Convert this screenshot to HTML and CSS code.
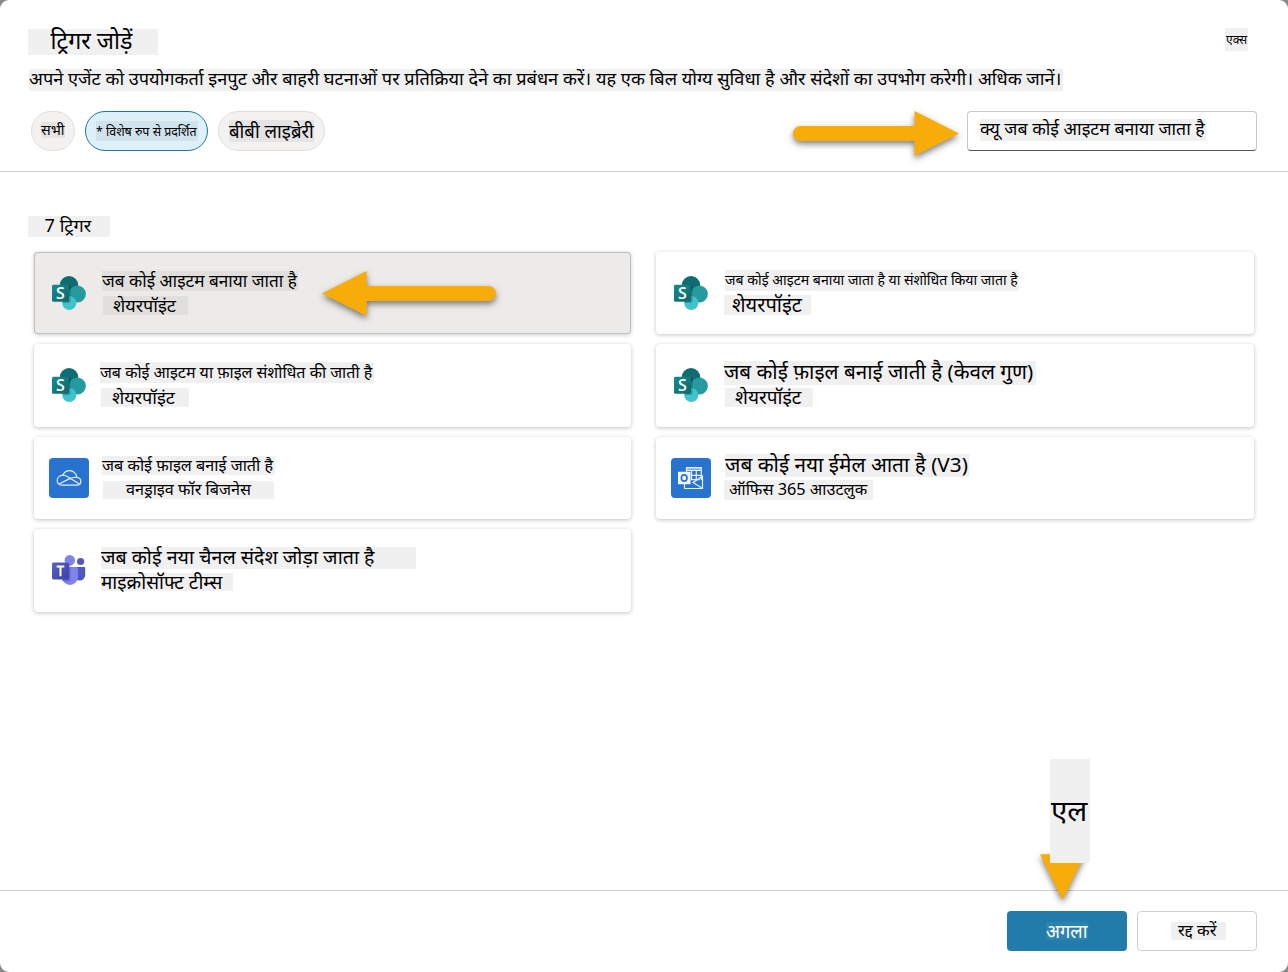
FILE: index.html
```
<!DOCTYPE html>
<html lang="hi">
<head>
<meta charset="utf-8">
<title>ट्रिगर जोड़ें</title>
<link rel="stylesheet" href="styles.css">
</head>
<body>
<svg class="defs" width="0" height="0" aria-hidden="true">
  <defs>
    <linearGradient id="spTile" x1="0" y1="0" x2="1" y2="1"><stop offset="0" stop-color="#158c8f"/><stop offset="1" stop-color="#0f666a"/></linearGradient>
    <linearGradient id="tmTile" x1="0" y1="0" x2="1" y2="1"><stop offset="0" stop-color="#5a62c3"/><stop offset="1" stop-color="#3940ab"/></linearGradient>
    <symbol id="sharepoint" viewBox="0 0 40 40">
      <circle cx="20" cy="12.2" r="9.2" fill="#0f6c70"/>
      <circle cx="28.3" cy="21" r="8.6" fill="#259a9f"/>
      <circle cx="20.3" cy="30" r="7" fill="#3fc3cf"/>
      <path d="M11 12.5h9.2q1.4 0 1.4 1.4v14.6q0 1.4-1.4 1.4h-6.8" fill="#000" opacity=".2"/>
      <rect x="3" y="11.8" width="17" height="17" rx="1.4" fill="url(#spTile)"/>
      <text x="11.5" y="26" text-anchor="middle" class="tile-letter">S</text>
    </symbol>
  </defs>
</svg>
<main class="dialog">
  <header class="top">
    <div class="title-row">
      <h1 class="label title">ट्रिगर जोड़ें</h1>
      <button class="close label">एक्स</button>
    </div>
    <p class="label desc">अपने एजेंट को उपयोगकर्ता इनपुट और बाहरी घटनाओं पर प्रतिक्रिया देने का प्रबंधन करें। यह एक बिल योग्य सुविधा है और संदेशों का उपभोग करेगी। अधिक जानें।</p>
    <div class="filters">
      <button class="chip all"><span class="label">सभी</span></button>
      <button class="chip featured"><span class="label">* विशेष रुप से प्रदर्शित</span></button>
      <button class="chip library"><span class="label">बीबी लाइब्रेरी</span></button>
      <div class="search"><span class="label">क्यू जब कोई आइटम बनाया जाता है</span></div>
    </div>
  </header>
  <section class="body">
    <h2 class="label count">7 ट्रिगर</h2>
    <div class="grid">
      <article class="card selected c1">
        <svg class="icon"><use href="#sharepoint"/></svg>
        <div class="text"><span class="label name">जब कोई आइटम बनाया जाता है</span><span class="label sub">शेयरपॉइंट</span></div>
      </article>
      <article class="card c2">
        <svg class="icon"><use href="#sharepoint"/></svg>
        <div class="text"><span class="label name">जब कोई आइटम बनाया जाता है या संशोधित किया जाता है</span><span class="label sub">शेयरपॉइंट</span></div>
      </article>
      <article class="card c3">
        <svg class="icon"><use href="#sharepoint"/></svg>
        <div class="text"><span class="label name">जब कोई आइटम या फ़ाइल संशोधित की जाती है</span><span class="label sub">शेयरपॉइंट</span></div>
      </article>
      <article class="card c4">
        <svg class="icon"><use href="#sharepoint"/></svg>
        <div class="text"><span class="label name">जब कोई फ़ाइल बनाई जाती है (केवल गुण)</span><span class="label sub">शेयरपॉइंट</span></div>
      </article>
      <article class="card c5">
        <svg class="icon" viewBox="0 0 40 40">
          <rect width="40" height="40" rx="4" fill="#2872d0"/>
          <g fill="none" stroke="#e8f1fc" stroke-width="1.2" stroke-linejoin="round" stroke-linecap="round">
            <path d="M13.2 27.2h14.3c2.5 0 4.3-1.6 4.3-3.8 0-2.1-1.7-3.8-4-3.9-.3-3.9-3.3-6.8-7.2-6.8-3 0-5.5 1.7-6.7 4.5-3.3.2-5.7 2.4-5.7 5.2 0 2.8 2.2 4.800 5 4.800z"/>
            <path d="M13.9 17.2c2 0 3.2.5 4.8 1.5l11.7 7.3M10 26l10.200-5.100c2.300-1.200 4.500-1.700 7.600-1.400"/>
          </g>
        </svg>
        <div class="text"><span class="label name">जब कोई फ़ाइल बनाई जाती है</span><span class="label sub">वनड्राइव फॉर बिजनेस</span></div>
      </article>
      <article class="card c6">
        <svg class="icon" viewBox="0 0 40 40">
          <rect width="40" height="40" rx="4" fill="#2872d0"/>
          <g fill="none" stroke="#e8f1fc" stroke-width="1.2">
            <path d="M15.5 14V9.6h14.8v12.400M15.500 12.500h14.800M20.500 17.300h9.800M20.500 21.700h8M20.500 12.800v9.500M25.300 12.800v9.800"/>
            <path d="M13.5 26v4.5h18V18.200l-9.500 6.300 9.300 5.800"/>
          </g>
          <path d="M15.5 9.1h14.8v3.200H15.500z" fill="#e8f1fc" opacity=".5"/>
          <rect x="7" y="13.8" width="12.5" height="12.4" fill="#f4f8fe"/>
          <ellipse cx="13.2" cy="20" rx="2.8" ry="3.2" fill="none" stroke="#2872d0" stroke-width="1.7"/>
        </svg>
        <div class="text"><span class="label name">जब कोई नया ईमेल आता है (V3)</span><span class="label sub">ऑफिस 365 आउटलुक</span></div>
      </article>
      <article class="card c7">
        <svg class="icon" viewBox="0 0 40 40">
          <circle cx="31.6" cy="11.5" r="3.6" fill="#5058c0"/>
          <path d="M25 17h10q1.2 0 1.2 1.2v6.8a5.5 5.5 0 0 1-11 0z" fill="#5058c0"/>
          <circle cx="20.8" cy="10.2" r="5.2" fill="#7f84e8"/>
          <path d="M13 17h14.3q1.6 0 1.6 1.6v8.300a8 8 0 0 1-16 0z" fill="#7f84e8"/>
          <path d="M13 14h7q1.500 0 1.500 1.500v14.500q0 1.300-1.500 1.300h-7z" fill="#33389a" opacity=".35"/>
          <rect x="3" y="12.5" width="17" height="17" rx="1.4" fill="url(#tmTile)"/>
          <path d="M7.700 16.600h7.600M11.500 16.600v9.600" stroke="#fff" stroke-width="2"/>
        </svg>
        <div class="text"><span class="label name">जब कोई नया चैनल संदेश जोड़ा जाता है</span><span class="label sub">माइक्रोसॉफ्ट टीम्स</span></div>
      </article>
    </div>
  </section>
  <footer class="actions">
    <button class="btn primary"><span class="label">अगला</span></button>
    <button class="btn secondary"><span class="label">रद्द करें</span></button>
  </footer>
  <svg class="arrows" viewBox="0 0 1288 972" aria-hidden="true">
    <path d="M800.500 126H914.500V111L959 133.500 914.500 156V141H800.500a7.500 7.500 0 0 1 0-15z"/>
    <path d="M488.500 286H366.700V271L322 293.500 366.700 316V301H488.500a7.500 7.500 0 0 0 0-15z"/>
    <path d="M1040 854.300H1085L1062.500 900z"/>
  </svg>
  <div class="callout">एल</div>
</main>
</body>
</html>
```

FILE: styles.css
```
* { box-sizing: border-box; }
body { margin: 0; background: #8a8a8a; font-family: "Noto Sans", "Noto Sans Devanagari", sans-serif; color: #000; }
button { font-family: inherit; color: inherit; }
.defs { position: absolute; }
.dialog { position: relative; display: flex; flex-direction: column; width: 1288px; height: 972px; background: #fff; border-radius: 9px; overflow: hidden; }
.label { display: block; flex: none; margin: 0; background: #f0f0f0; white-space: nowrap; font-weight: 400; }

/* header */
.top { height: 172px; padding: 28px 31px 0 28px; border-bottom: 1px solid #d0d0d0; }
.title-row { display: flex; justify-content: space-between; height: 41px; }
.title { width: 130px; height: 26px; margin-top: 1px; padding-left: 22.500px; font-size: 23.200px; line-height: 22px; }
.close { width: 23px; height: 23px; margin-right: 9px; padding: 0 0 0 1px; border: 0; font-size: 12px; line-height: 20px; text-align: left; }
.desc { width: 1034px; height: 22px; margin-left: 1px; font-size: 18.180px; line-height: 18px; }
.filters { display: flex; align-items: flex-start; gap: 10px; margin: 20px 0 0 3px; }
.chip { height: 40px; display: flex; align-items: flex-start; padding: 0; border: 1px solid #e1dfdd; border-radius: 20px; background: #f3f2f1; }
.chip .label { background: #e5e4e4; text-align: left; }
.all { width: 44px; padding: 10px 0 0 9px; }
.all .label { width: 24px; height: 16px; font-size: 14.300px; line-height: 16px; }
.featured { width: 123px; padding: 9px 0 0 10px; background: #def0fa; border-color: #1f76a3; }
.featured .label { width: 102px; height: 20px; font-size: 12.400px; line-height: 21px; background: #d0e2ec; }
.library { width: 107px; padding: 8px 0 0 10px; }
.library .label { width: 85px; height: 22px; font-size: 18.500px; line-height: 21px; }
.search { width: 290px; height: 40px; margin-left: auto; padding: 7px 0 0 12px; border: 1px solid #c8c8c8; border-bottom-color: #555; border-radius: 4px; }
.search .label { width: 226px; height: 22px; font-size: 17.700px; line-height: 18px; }

/* trigger list */
.body { flex: 1; padding: 44px 34px 0 28px; }
.count { width: 82px; height: 21px; padding-left: 16.500px; font-size: 18.200px; line-height: 18px; }
.grid { display: grid; grid-template-columns: 597px 598px; grid-auto-rows: 82.400px; gap: 10px 25px; margin: 15px 0 0 6px; }
.card { display: flex; border-radius: 4px; background: #fff; box-shadow: 0 1px 4px rgba(0,0,0,.24); }
.selected { background: #edebe9; box-shadow: inset 0 0 0 1px #bfbfbf, 0 1px 4px rgba(0,0,0,.2); }
.selected .label { background: #e0dfdd; }
.icon { width: 40px; height: 40px; margin: 21px 0 0 15px; flex: none; }
.tile-letter { font: 600 16px "Open Sans", sans-serif; fill: #fff; }
.text { display: flex; flex-direction: column; align-items: flex-start; }
.c1 .text { padding: 19px 0 0 13px; }
.c1 .name { width: 196px; height: 20px; font-size: 17.200px; line-height: 19px; }
.c1 .sub { width: 85px; height: 19px; margin: 5px 0 0 1px; padding-left: 10px; font-size: 18px; line-height: 19px; }
.c2 .text { padding: 18px 0 0 13px; }
.c2 .name { width: 294px; height: 21px; margin-left: 1px; font-size: 14.120px; line-height: 19px; }
.c2 .sub { width: 87px; height: 20px; margin-top: 4px; padding-left: 8px; font-size: 20px; line-height: 19px; }
.c3 .text { padding: 18px 0 0 11px; }
.c3 .name { width: 274px; height: 21px; font-size: 16px; line-height: 20px; }
.c3 .sub { width: 88px; height: 19px; margin: 5px 0 0 1px; padding-left: 11px; font-size: 18px; line-height: 19px; }
.c4 .text { padding: 17px 0 0 13px; }
.c4 .name { width: 312px; height: 24px; font-size: 20.650px; line-height: 20px; }
.c4 .sub { width: 88px; height: 19px; margin: 3px 0 0 1px; padding-left: 10px; font-size: 19px; line-height: 18px; }
.c5 .text { padding: 19px 0 0 13px; }
.c5 .name { width: 173px; height: 19px; font-size: 16.200px; line-height: 19px; }
.c5 .sub { width: 171px; height: 18px; margin: 6px 0 0 1px; padding-left: 23px; font-size: 16.200px; line-height: 17px; }
.c6 .text { padding: 17px 0 0 13px; }
.c6 .name { width: 244px; height: 23px; margin-left: 1px; font-size: 20.750px; line-height: 20px; }
.c6 .sub { width: 149px; height: 20px; margin-top: 3px; padding-left: 5px; font-size: 16.300px; line-height: 18px; }
.c7 .text { padding: 18px 0 0 12px; }
.c7 .name { width: 315px; height: 22px; font-size: 19.600px; line-height: 20px; }
.c7 .sub { width: 132px; height: 18px; margin-top: 4px; font-size: 19px; line-height: 18px; }

/* footer */
.actions { display: flex; justify-content: flex-end; gap: 10px; height: 82px; padding: 20px 31px 0 0; border-top: 1px solid #d0d0d0; }
.btn { display: flex; align-items: flex-start; width: 120px; height: 40px; padding: 0; border-radius: 4px; }
.btn .label { text-align: left; }
.primary { padding: 11px 0 0 39px; border: 0; background: #217cab; color: #fff; }
.primary .label { width: 42px; height: 18px; background: #2d83af; font-size: 18.300px; line-height: 17px; }
.secondary { padding: 10px 0 0 33px; border: 1px solid #d0d0d0; background: #fff; }
.secondary .label { width: 55px; height: 18px; padding-left: 7px; font-size: 16.500px; line-height: 16px; }

/* annotations over the dialog */
.arrows { position: absolute; inset: 0; width: 1288px; height: 972px; fill: #f8ac0a; filter: drop-shadow(0 3px 3px rgba(0,0,0,.5)); pointer-events: none; }
.callout { position: absolute; left: 1050px; top: 759px; width: 40px; height: 104px; padding-left: 1px; background: #f0f0f0; font-size: 29.500px; line-height: 102px; }
```
